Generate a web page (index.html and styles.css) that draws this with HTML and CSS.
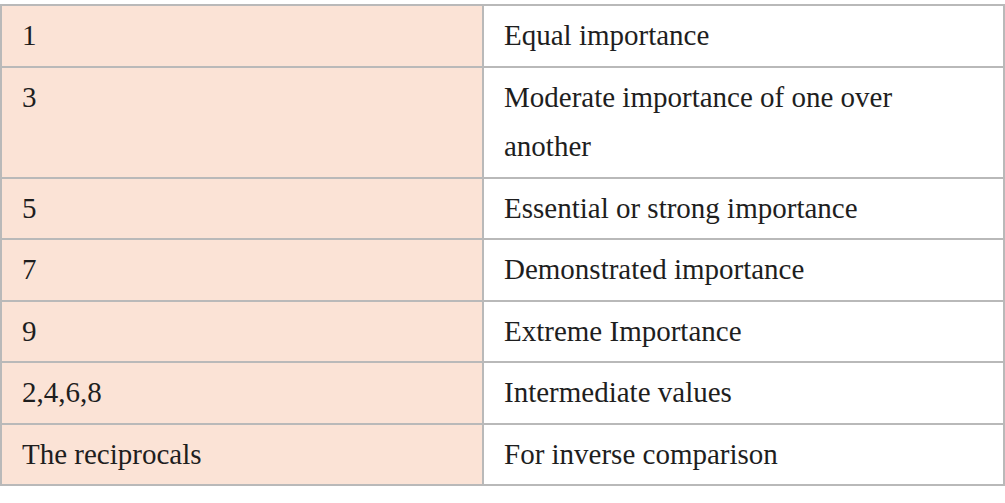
FILE: index.html
```html
<!DOCTYPE html>
<html lang="en">
<head>
<meta charset="utf-8">
<title>Scale of importance</title>
<link rel="stylesheet" href="styles.css">
</head>
<body>
<table class="scale">
  <colgroup>
    <col class="col-value">
    <col class="col-desc">
  </colgroup>
  <tbody>
    <tr><td class="value">1</td><td class="desc">Equal importance</td></tr>
    <tr><td class="value">3</td><td class="desc">Moderate importance of one over another</td></tr>
    <tr><td class="value">5</td><td class="desc">Essential or strong importance</td></tr>
    <tr><td class="value">7</td><td class="desc">Demonstrated importance</td></tr>
    <tr><td class="value">9</td><td class="desc">Extreme Importance</td></tr>
    <tr><td class="value">2,4,6,8</td><td class="desc">Intermediate values</td></tr>
    <tr><td class="value">The reciprocals</td><td class="desc">For inverse comparison</td></tr>
  </tbody>
</table>
</body>
</html>
```

FILE: styles.css
```css
html, body {
  margin: 0;
  padding: 0;
  background: #ffffff;
}

body {
  padding-top: 4px;
  font-family: "Liberation Serif", "DejaVu Serif", serif;
  color: #1e1e1e;
}

.scale {
  width: 1005px;
  border-collapse: collapse;
  table-layout: fixed;
}

.col-value {
  width: 482px;
}

.scale td {
  border: 2px solid #b9b9b9;
  padding: 5px 20px;
  font-size: 29px;
  line-height: 49.5px;
  vertical-align: top;
  text-align: left;
}

.scale td.value {
  background: #fbe3d6;
}

.scale td.desc {
  background: #ffffff;
  padding-right: 100px;
}
```
